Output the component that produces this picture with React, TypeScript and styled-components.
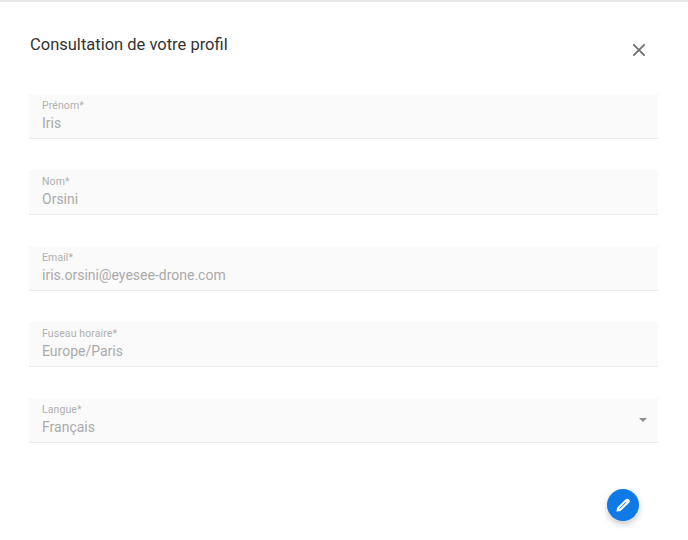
import styled, { createGlobalStyle } from "styled-components"

const GlobalStyle = createGlobalStyle`
  html, body {
    margin: 0;
    padding: 0;
    background: #fff;
    font-family: Roboto, "Liberation Sans", sans-serif;
  }
`

type FieldProps = {
  label: string
  value: string
  select?: boolean
}

const fields: FieldProps[] = [
  { label: "Prénom*", value: "Iris" },
  { label: "Nom*", value: "Orsini" },
  { label: "Email*", value: "iris.orsini@eyesee-drone.com" },
  { label: "Fuseau horaire*", value: "Europe/Paris" },
  { label: "Langue*", value: "Français", select: true },
]

const Field = ({ label, value, select }: FieldProps) => (
  <FieldBox>
    <Label>{label}</Label>
    <Value>{value}</Value>
    {select && <Arrow />}
  </FieldBox>
)

export default function App() {
  return (
    <Page>
      <GlobalStyle />
      <Header>
        <Title>Consultation de votre profil</Title>
        <CloseButton>
          <svg width="24" height="24" viewBox="0 0 24 24" fill="none" stroke="#707070" strokeWidth="1.8">
            <path d="M6.3 6.3 17.7 17.7M17.7 6.3 6.3 17.7" />
          </svg>
        </CloseButton>
      </Header>
      <Form>
        {fields.map((field) => (
          <Field key={field.label} {...field} />
        ))}
      </Form>
      <Footer>
        <Fab>
          <svg width="18" height="18" viewBox="0 0 18 18" fill="none" strokeLinecap="round" strokeLinejoin="round">
            <path d="M3.2 14.8 3.8 12 12.2 3.8a1.8 1.8 0 0 1 2.5 2.5L6.3 14.3z" fill="#fff" stroke="#fff" strokeWidth="1.4" />
            <path d="M6 12.2 12.2 6" stroke="#0f7ae5" strokeWidth="1" />
          </svg>
        </Fab>
      </Footer>
    </Page>
  )
}

const Page = styled.div`
  width: 688px;
  height: 540px;
  box-sizing: border-box;
  border-top: 2px solid #e8e8e8;
  padding: 0 30px 0 29px;
  overflow: hidden;
`

const Header = styled.div`
  display: flex;
  justify-content: space-between;
  align-items: flex-start;
  height: 92px;
`

const Title = styled.h2`
  margin: 32px 0 0 1px;
  font-size: 16.5px;
  line-height: 21px;
  font-weight: 400;
  color: #333;
`

const CloseButton = styled.div`
  display: flex;
  margin: 36px 7px 0 0;
`

const Form = styled.div`
  display: flex;
  flex-direction: column;
  gap: 31px;
`

const FieldBox = styled.div`
  position: relative;
  height: 45px;
  box-sizing: border-box;
  padding: 6px 13px 0;
  background: #fafafa;
  border-bottom: 1px solid #ececec;
`

const Label = styled.div`
  font-size: 10.5px;
  line-height: 12px;
  letter-spacing: 0.1px;
  color: #b0b0b0;
`

const Value = styled.div`
  font-size: 14px;
  line-height: 20px;
  margin-top: 1px;
  color: #aaa;
`

const Arrow = styled.span`
  position: absolute;
  right: 11px;
  top: 20px;
  width: 0;
  height: 0;
  border-left: 4px solid transparent;
  border-right: 4px solid transparent;
  border-top: 4px solid #8f8f8f;
`

const Footer = styled.div`
  display: flex;
  justify-content: flex-end;
  margin-top: 46px;
  padding-right: 19px;
`

const Fab = styled.div`
  display: flex;
  align-items: center;
  justify-content: center;
  width: 32px;
  height: 32px;
  border-radius: 50%;
  background: #0f7ae5;
  box-shadow: 0 3px 6px rgba(0, 0, 0, 0.22);
`
